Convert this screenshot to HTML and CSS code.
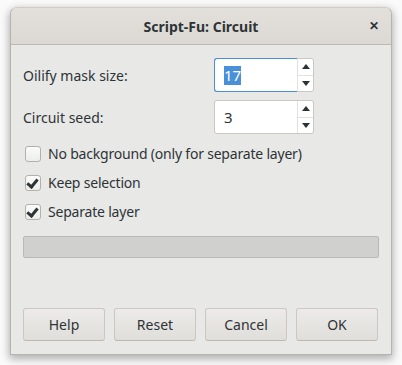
FILE: index.html
```
<!doctype html>
<html lang="en">
  <head>
    <meta charset="UTF-8" />
    <title>Script-Fu: Circuit</title>
    <link rel="stylesheet" href="styles.css">
  </head>
  <body>
    <div class="window">
      <div class="titlebar">
        <span class="title">Script-Fu: Circuit</span>
        <span class="close">&#x2715;</span>
      </div>
      <div class="content">
        <div class="field">
          <label>Oilify mask size:</label>
          <div class="spin focused">
            <div class="entry"><span class="sel">17</span></div>
            <div class="arrows">
              <span class="up"></span>
              <span class="down"></span>
            </div>
          </div>
        </div>
        <div class="field">
          <label>Circuit seed:</label>
          <div class="spin">
            <div class="entry">3</div>
            <div class="arrows">
              <span class="up"></span>
              <span class="down"></span>
            </div>
          </div>
        </div>
        <div class="checks">
          <div class="check"><span class="box"></span>No background (only for separate layer)</div>
          <div class="check"><span class="box on"></span>Keep selection</div>
          <div class="check"><span class="box on"></span>Separate layer</div>
        </div>
        <div class="progress"></div>
      </div>
      <div class="actions">
        <button>Help</button>
        <button>Reset</button>
        <button>Cancel</button>
        <button>OK</button>
      </div>
    </div>
  </body>
</html>
```

FILE: styles.css
```
html,
body {
  margin: 0;
  padding: 0;
}
body {
  background: #fafafa;
  font-family: "Noto Sans", sans-serif;
  font-size: 14px;
  color: #2e3436;
  width: 402px;
  height: 365px;
  overflow: hidden;
}
.window {
  margin: 7px 0 0 10px;
  width: 380px;
  height: 346px;
  background: #e8e8e7;
  border: 1px solid #b4b4b2;
  border-top-color: #d0cdc9;
  border-radius: 7px 7px 0 0;
  box-shadow: 0 3px 9px 1px rgba(0, 0, 0, 0.3);
  display: flex;
  flex-direction: column;
}
.titlebar {
  height: 36px;
  flex: none;
  background: linear-gradient(#e3e0dc, #dcd9d5);
  border-bottom: 1px solid #bfb8b1;
  border-radius: 7px 7px 0 0;
  display: flex;
  align-items: center;
  justify-content: center;
  position: relative;
}
.title {
  font-weight: bold;
  font-size: 14px;
  color: #2e3436;
}
.close {
  position: absolute;
  right: 12px;
  top: 9px;
  font-size: 12px;
  font-weight: bold;
  color: #2e3436;
}
.content {
  flex: 1;
  padding: 13px 12px 0 12px;
  display: flex;
  flex-direction: column;
}
.field {
  display: flex;
  align-items: center;
  height: 34px;
  margin-bottom: 8px;
}
.field label {
  width: 191px;
}
.spin {
  display: flex;
  width: 100px;
  height: 34px;
  box-sizing: border-box;
  background: #fff;
  border: 1px solid #cdc7c2;
  border-radius: 3px;
}
.spin.focused .entry {
  border: 1px solid #4a90d9;
  border-right: none;
  margin: -1px 0 -1px -1px;
  border-radius: 3px 0 0 3px;
}
.entry {
  flex: 1;
  display: flex;
  align-items: center;
  padding-left: 9px;
  font-size: 15px;
}
.sel {
  background: #4a90d9;
  color: #fff;
  line-height: 19px;
}
.arrows {
  width: 15px;
  border-left: 1px solid #e4e2df;
  display: flex;
  flex-direction: column;
}
.arrows span {
  flex: 1;
  display: flex;
  align-items: center;
  justify-content: center;
}
.arrows .up {
  border-bottom: 1px solid #e4e2df;
}
.arrows .up::after {
  content: "";
  border: 4px solid transparent;
  border-top: none;
  border-bottom: 5px solid #2e3436;
}
.arrows .down::after {
  content: "";
  border: 4px solid transparent;
  border-bottom: none;
  border-top: 5px solid #2e3436;
}
.checks {
  display: flex;
  flex-direction: column;
  margin-top: -3px;
}
.check {
  display: flex;
  align-items: center;
  height: 29px;
  letter-spacing: -0.2px;
}
.box {
  width: 14px;
  height: 14px;
  border: 1px solid #b6b0aa;
  border-radius: 3px;
  background: linear-gradient(#fbfbfb, #ededec);
  margin: 0 7px 0 2px;
  position: relative;
}
.box.on::after {
  content: "";
  position: absolute;
  left: 3px;
  top: 1px;
  width: 4px;
  height: 8px;
  border: solid #2e3436;
  border-width: 0 3px 3px 0;
  transform: rotate(40deg);
}
.progress {
  margin-top: 10px;
  height: 22px;
  box-sizing: border-box;
  background: #d0d0ce;
  border: 1px solid #b8b8b6;
  border-radius: 2px;
}
.actions {
  display: flex;
  gap: 9px;
  padding: 0 13px 13px 12px;
}
button {
  flex: 1;
  height: 33px;
  font-family: "Noto Sans", sans-serif;
  font-size: 14px;
  color: #2e3436;
  background: linear-gradient(#edebe9, #e0deda);
  border: 1px solid #cdc7c2;
  border-bottom-color: #bfb8b1;
  border-radius: 3px;
}
```
